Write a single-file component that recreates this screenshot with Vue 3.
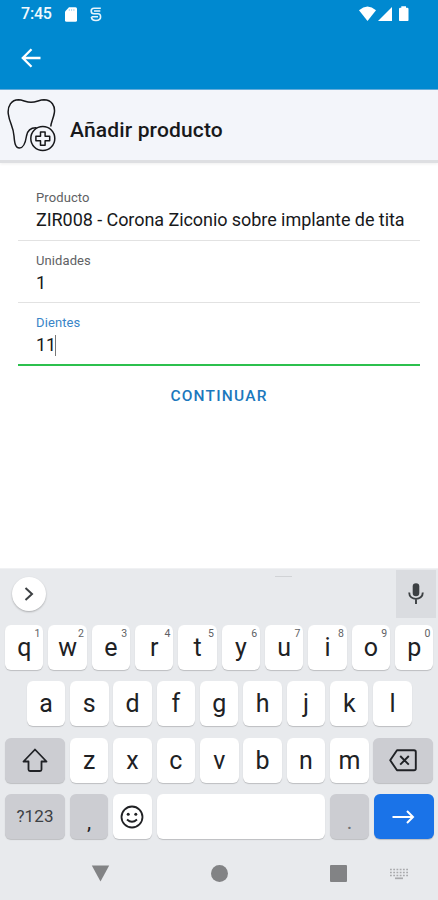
<script setup>
const topRow = [...'qwertyuiop'].map((letter, i) => ({ letter, hint: (i + 1) % 10 }))
const homeRow = [...'asdfghjkl']
const bottomRow = [...'zxcvbnm']
const fields = [
  { label: 'Producto', value: 'ZIR008 - Corona Ziconio sobre implante de tita', wide: true },
  { label: 'Unidades', value: '1' },
  { label: 'Dientes', value: '11', active: true },
]
</script>

<template>
  <div class="screen">
    <header class="appbar">
      <div class="status">
        <span class="time">7:45</span>
        <svg class="sd" width="12" height="15" viewBox="0 0 12 15"><path d="M4 0.300h6.500q1.500 0 1.500 1.500v11.400q0 1.500-1.500 1.500h-9Q0 14.700 0 13.200V4.500z" fill="#fff" /><path d="M4.300 2v2M6.600 2v2M8.900 2v2" stroke="#8cc8ea" stroke-width=".7" /></svg>
        <svg class="sync" width="12" height="15" viewBox="0 0 12 15" fill="none" stroke="#e6f4fc" stroke-width="1.600"><path d="M10.800 1.200H4Q1.200 1.200 1.200 3.900T4 6.800h4q2.600 0 2.600 3.100T5.900 13.500Q1.600 13.500 1.400 9.900M4 4h6.300M1.500 9.800h6.500" /></svg>
        <span class="spacer"></span>
        <svg width="50" height="16" viewBox="0 0 50 16" fill="#fff"><path d="M0 4.200Q8.500-3 17 4.200L8.500 15z" /><path d="M33 1v14H19z" /><path d="M42.300 0.300h4.700v1.400h1.300q1.200 0 1.200 1.200v11q0 1.200-1.200 1.200h-7.100q-1.200 0-1.200-1.200v-11q0-1.200 1.200-1.200h1.100z" /></svg>
      </div>
      <svg class="back" width="20" height="20" viewBox="0 0 20 20" fill="none" stroke="#fff" stroke-width="2.300"><path d="M19.500 10H2M10.500 1.300 1.800 10l8.700 8.700" /></svg>
    </header>

    <section class="heading">
      <svg class="tooth" width="50" height="54" viewBox="0 0 50 54" fill="none" stroke="#17181b" stroke-width="1.500" stroke-linejoin="round">
        <path d="M29.500 29.800C23 29.500 20.500 32.500 19.500 38C18.500 44.500 16.500 50 12.500 50C8 50 7.500 44 7 38C6.500 29 2.500 25 1.300 16C0.300 8 4.500 1.800 11.500 1.800C16 2 19 4.300 24 4.300C29.500 4.300 32 2 37 1.800C44.500 1.800 48.500 8 47.300 15C46.300 21 44 24 43.800 28.500" />
        <circle cx="35.800" cy="40.500" r="12" />
        <path d="M33.500 34h4.600v4.300h4.600v4.500h-4.600v4.500h-4.600v-4.500h-4.600v-4.500h4.600z" />
      </svg>
      <h1>Añadir producto</h1>
    </section>

    <main class="form">
      <label v-for="f in fields" :key="f.label" class="field" :class="{ active: f.active }">
        <span class="label">{{ f.label }}</span>
        <span class="value" :class="{ wide: f.wide }">{{ f.value }}<i v-if="f.active" class="caret"></i></span>
      </label>
      <button class="continue">CONTINUAR</button>
    </main>

    <section class="keyboard">
      <div class="tools">
        <span class="expand"><svg width="10" height="14" viewBox="0 0 10 14" fill="none" stroke="#3d4043" stroke-width="2"><path d="M1.500 1 8 7l-6.500 6" /></svg></span>
        <span class="handle"></span>
        <span class="mic"><svg width="16" height="22" viewBox="0 0 16 22" fill="none" stroke="#3c4043" stroke-width="1.900"><rect x="4.700" y="0.300" width="6.600" height="13" rx="3.300" fill="#3c4043" stroke="none" /><path d="M1.200 9.500c0 8.500 13.600 8.500 13.600 0M8 16v5" /></svg></span>
      </div>
      <div class="keys">
        <div class="row">
          <span v-for="k in topRow" :key="k.letter" class="key">{{ k.letter }}<sup>{{ k.hint }}</sup></span>
        </div>
        <div class="row home">
          <span v-for="k in homeRow" :key="k" class="key">{{ k }}</span>
        </div>
        <div class="row">
          <span class="key wide gray"><svg width="26" height="25" viewBox="0 0 26 25" fill="none" stroke="#202226" stroke-width="1.800" stroke-linejoin="round"><path d="M13 1.500 1.500 13.500h5v8q0 1.500 1.500 1.500h10q1.500 0 1.500-1.500v-8h5z" /></svg></span>
          <span v-for="k in bottomRow" :key="k" class="key">{{ k }}</span>
          <span class="key wide gray"><svg width="28" height="23" viewBox="0 0 28 23" fill="none" stroke="#202226" stroke-width="1.900" stroke-linejoin="round"><path d="M8 1.200h17q1.800 0 1.800 1.800v16.500q0 1.800-1.800 1.800H8L1.200 11.300zM11.200 7l8.600 8.600M19.800 7l-8.600 8.600" /></svg></span>
        </div>
        <div class="row">
          <span class="key wide gray symbols">?123</span>
          <span class="key gray punct">,</span>
          <span class="key emoji"><svg width="24" height="24" viewBox="0 0 24 24" fill="none" stroke="#202124" stroke-width="1.800"><circle cx="12" cy="12" r="10.500" /><path d="M7 14.500q5 4.500 10 0" /><g fill="#202124" stroke="none"><circle cx="8.200" cy="9.300" r="1.500" /><circle cx="15.800" cy="9.300" r="1.500" /></g></svg></span>
          <span class="key space"></span>
          <span class="key gray punct dot">.</span>
          <span class="key wide enter"><svg width="23" height="14" viewBox="0 0 23 14" fill="none" stroke="#fff" stroke-width="2"><path d="M.5 7h20.500M15 1l6 6-6 6" /></svg></span>
        </div>
      </div>
      <nav class="nav">
        <svg class="nav-back" width="19" height="17" viewBox="0 0 19 17"><path d="M.8.500h17.400L9.500 16.500z" fill="#828385" /></svg>
        <span class="nav-home"></span>
        <span class="nav-recent"></span>
        <svg class="nav-ime" width="18" height="12" viewBox="0 0 18 12" stroke="#a9aaad" fill="none"><path d="M0 1.500h18M0 4.500h18M0 7.500h18" stroke-width="1.700" stroke-dasharray="1.800 1.440" /><path d="M5 10.300h8" stroke-width="1.700" /></svg>
      </nav>
    </section>
  </div>
</template>

<style>
body { margin: 0; background: #fff; }
</style>

<style scoped>
* { box-sizing: border-box; }
.screen { width: 438px; height: 900px; display: flex; flex-direction: column; overflow: hidden; background: #fff; font-family: Roboto, "Liberation Sans", sans-serif; color: #18191b; }
svg { display: block; flex: none; }
.appbar { height: 90px; background: #0089d0; border-bottom: 1px solid #65aedc; flex: none; }
.status { display: flex; align-items: center; height: 28px; padding: 0 29.500px 0 21px; }
.time { width: 44px; color: #f1f9fd; font-size: 16px; font-weight: 500; line-height: 28px; letter-spacing: -.2px; }
.sync { margin-left: 13px; }
.spacer { flex: 1; }
.back { margin: 20px 0 0 21px; }
.heading { height: 73px; flex: none; display: flex; align-items: flex-start; padding: 8px 0 0 7px; background: #f3f5fa; border-bottom: 3px solid #dedfe2; box-shadow: 0 1px 3px #0001; }
h1 { margin: 17px 0 0 13px; font-size: 21px; line-height: 30px; font-weight: 500; letter-spacing: .15px; white-space: nowrap; }
.form { flex: 1; padding: 15px 18px 0; display: flex; flex-direction: column; }
.field { display: flex; flex-direction: column; height: 62.500px; padding: 12px 0 0 18px; border-bottom: 1.500px solid #e2e2e2; }
.label { font-size: 13px; line-height: 16px; letter-spacing: .1px; color: #606164; }
.value { display: flex; align-items: center; height: 26px; margin-top: 1px; font-size: 18px; line-height: 26px; letter-spacing: 0; white-space: nowrap; }
.value.wide { letter-spacing: -.06px; }
.active { border-bottom: 2px solid #2cc04e; }
.active .label { color: #3885c8; }
.caret { width: 1px; height: 21px; margin-left: -1px; background: #777; }
.continue { align-self: center; margin: 17px 0 0; padding: 0; border: 0; background: none; color: #1b78bd; font: 500 15.500px/26px Roboto, sans-serif; letter-spacing: 1.200px; }
.keyboard { height: 332px; flex: none; display: flex; flex-direction: column; background: #e8eaed; border-top: 1px solid #f0f1f3; }
.tools { height: 56px; flex: none; display: flex; align-items: flex-start; padding: 1px 2px 0 12px; }
.expand { display: flex; align-items: center; justify-content: center; width: 34px; height: 34px; margin-top: 7px; background: #fff; border-radius: 50%; box-shadow: 0 1px 2px #0004; }
.handle { width: 17px; height: 1px; margin: 6px 0 0 229px; background: #d1d3d6; }
.mic { width: 40px; height: 48px; margin-left: auto; display: flex; align-items: center; justify-content: center; background: #dadce0; }
.keys { display: flex; flex-direction: column; gap: 11.400px; padding: 0 4.500px 0 5px; }
.row { display: flex; gap: 4.850px; height: 45px; }
.home { padding: 0 21.700px; }
.key { flex: 1 1 0; min-width: 0; position: relative; display: flex; align-items: center; justify-content: center; background: #fff; border-radius: 6px; box-shadow: 0 1px 1px #00000030; color: #202124; font-size: 25px; line-height: 45px; }
.key sup { position: absolute; top: 3px; right: 3px; font-size: 10.500px; line-height: 12px; color: #606164; }
.key.wide { flex: 0 0 60px; }
.key.gray { background: #cccdd2; }
.key.symbols { font-size: 17px; letter-spacing: .1px; color: #3c4043; }
.key.punct { flex: 0 0 38.490px; padding-top: 11px; font-size: 21px; }
.key.dot { color: #707276; }
.key.emoji { flex: 0 0 38.490px; }
.key.enter { background: #1a73e8; }
.nav { flex: 1; display: flex; align-items: center; padding: 8px 30px 0 91px; }
.nav-home { width: 17px; height: 17px; margin-left: 101px; border-radius: 50%; background: #828385; }
.nav-recent { width: 17px; height: 17px; margin-left: 102px; border-radius: 1px; background: #828385; }
.nav-ime { margin-left: auto; }
</style>
